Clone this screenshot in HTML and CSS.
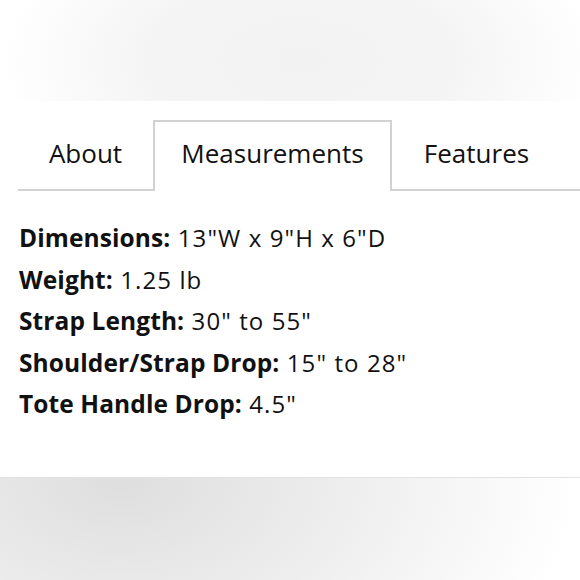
FILE: index.html
```html
<!DOCTYPE html>
<html>
<head>
<meta charset="utf-8">
<link rel="stylesheet" href="styles.css">
</head>
<body>
<div class="shade-top"></div>
<section class="panel">
  <nav class="tabs">
    <div class="tab tab-about">About</div>
    <div class="tab tab-meas active">Measurements</div>
    <div class="tab tab-feat">Features</div>
  </nav>
  <ul class="specs">
    <li><b>Dimensions:</b> 13"W x 9"H x 6"D</li>
    <li><b>Weight:</b> 1.25 lb</li>
    <li><b>Strap Length:</b> 30" to 55"</li>
    <li><b>Shoulder/Strap Drop:</b> 15" to 28"</li>
    <li><b>Tote Handle Drop:</b> 4.5"</li>
  </ul>
</section>
<div class="shade-bottom"></div>
</body>
</html>
```
FILE: styles.css
```css
html, body {
  margin: 0;
  padding: 0;
  background: #fff;
}
body {
  width: 580px;
  height: 580px;
  overflow: hidden;
  font-family: "Open Sans", Lato, sans-serif;
  color: #111;
}
.shade-top {
  height: 101px;
  background: radial-gradient(ellipse 300px 160px at 300px 60px, #f2f2f2 0%, #f4f4f4 50%, #ffffff 100%);
}
.panel {
  background: #fff;
  border-bottom: 1px solid #e3e3e3;
  padding-top: 19px;
  box-sizing: border-box;
  height: 377px;
}
.tabs {
  display: flex;
  align-items: stretch;
  margin-left: 18px;
  border-bottom: 2px solid #d2d2d2;
  height: 69px;
}
.tab {
  box-sizing: border-box;
  padding-top: 15px;
  text-align: center;
  font-size: 26px;
  font-weight: 400;
  line-height: normal;
}
.tab-about { width: 135px; }
.tab-meas { width: 239px; }
.tab-feat { width: 169px; }
.tab.active {
  border: 2px solid #d2d2d2;
  border-bottom: none;
  background: #fff;
  margin-bottom: -2px;
  padding-top: 13px;
}
.specs {
  list-style: none;
  margin: 26px 0 0 19px;
  padding: 0;
  font-size: 24px;
  line-height: 41.5px;
  letter-spacing: 1.1px;
}
.specs b {
  font-size: 24.5px;
  font-weight: 700;
  letter-spacing: 0.1px;
}
.shade-bottom {
  height: 102px;
  background: radial-gradient(ellipse 460px 300px at 120px 0px, #dedede 0%, #eeeeee 50%, #ffffff 100%);
}
```
